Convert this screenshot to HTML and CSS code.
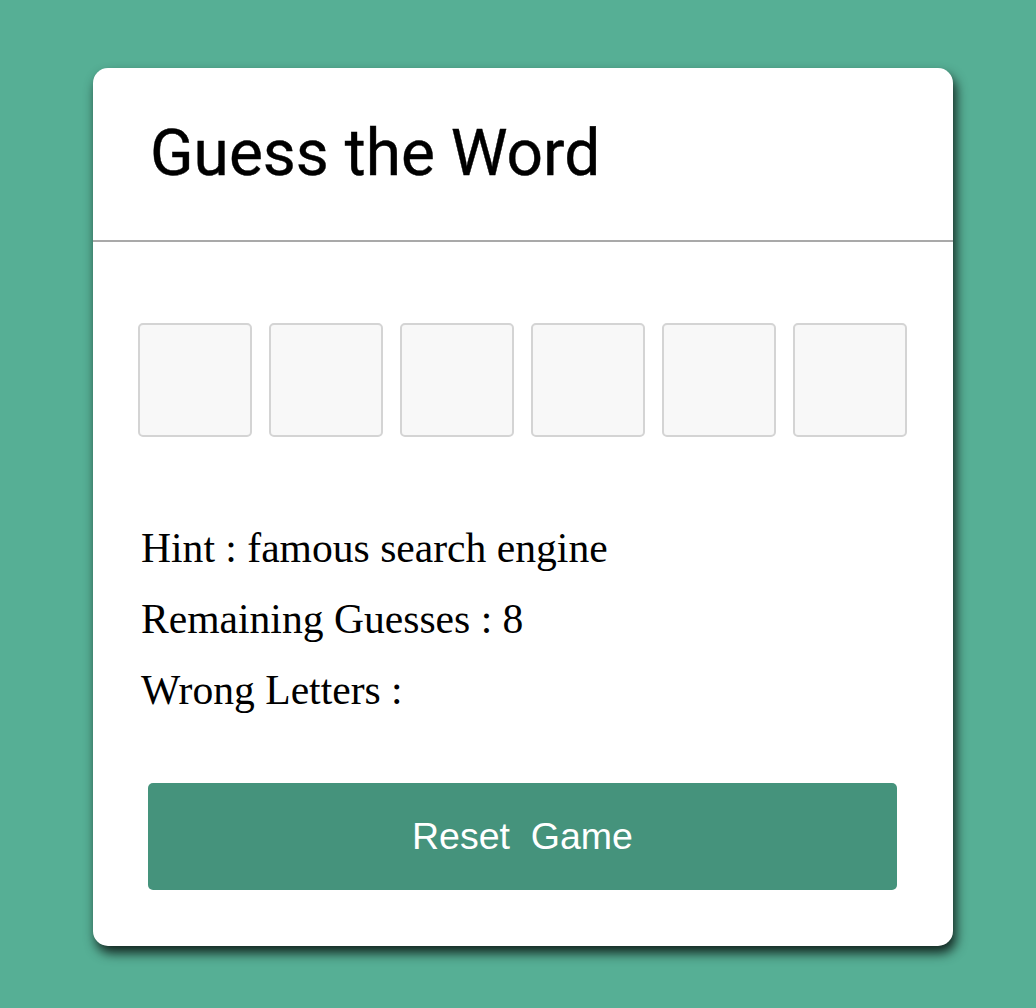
FILE: index.html
```html
<!DOCTYPE html>
<html lang="en">
  <head>
    <meta charset="UTF-8" />
    <meta name="viewport" content="width=device-width, initial-scale=1.0" />
    <title>Guess the Word</title>
    <link rel="stylesheet" href="styles.css">
  </head>
  <body>
    <div class="wrapper">
      <header>
        <h1>Guess the Word</h1>
      </header>
      <div class="content">
        <div class="inputs">
          <input type="text" disabled>
          <input type="text" disabled>
          <input type="text" disabled>
          <input type="text" disabled>
          <input type="text" disabled>
          <input type="text" disabled>
        </div>
        <div class="details">
          <p class="hint">Hint : <span>famous search engine</span></p>
          <p class="guess-left">Remaining Guesses : <span>8</span></p>
          <p class="wrong-letter">Wrong Letters : <span></span></p>
        </div>
        <button class="reset-btn">Reset&nbsp; Game</button>
      </div>
    </div>
  </body>
</html>
```

FILE: styles.css
```css
*{
    margin: 0;
    padding: 0;
    box-sizing: border-box;
}
body{
    background: #56af95;
    padding: 68px 83px 62px 93px;
}
.wrapper{
    width: 860px;
    height: 878px;
    background: #fff;
    border-radius: 15px;
    box-shadow: 3px 7px 12px rgba(0, 0, 0, 0.8);
}
header{
    height: 174px;
    padding: 46px 57px 0;
    border-bottom: 2px solid #a9a9a9;
}
header h1{
    font-family: Roboto, sans-serif;
    font-weight: 400;
    font-size: 64px;
    line-height: 80px;
    -webkit-text-stroke: 0.4px #000;
}
.content{
    padding: 81px 46px 0 45px;
}
.inputs{
    display: flex;
    justify-content: space-between;
}
.inputs input{
    width: 114px;
    height: 114px;
    border: 2px solid #d4d4d4;
    border-radius: 5px;
    background: #f8f8f8;
}
.details{
    margin-top: 76px;
    padding-left: 3px;
}
.details p{
    font-family: "Liberation Serif", serif;
    font-size: 41.6px;
    line-height: 71px;
}
.reset-btn{
    display: block;
    width: 749px;
    height: 107px;
    margin: 57px 0 0 10px;
    border: none;
    border-radius: 5px;
    background: #45937c;
    color: #fff;
    font-family: "Liberation Sans", Arial, sans-serif;
    font-size: 37.5px;
}
```
